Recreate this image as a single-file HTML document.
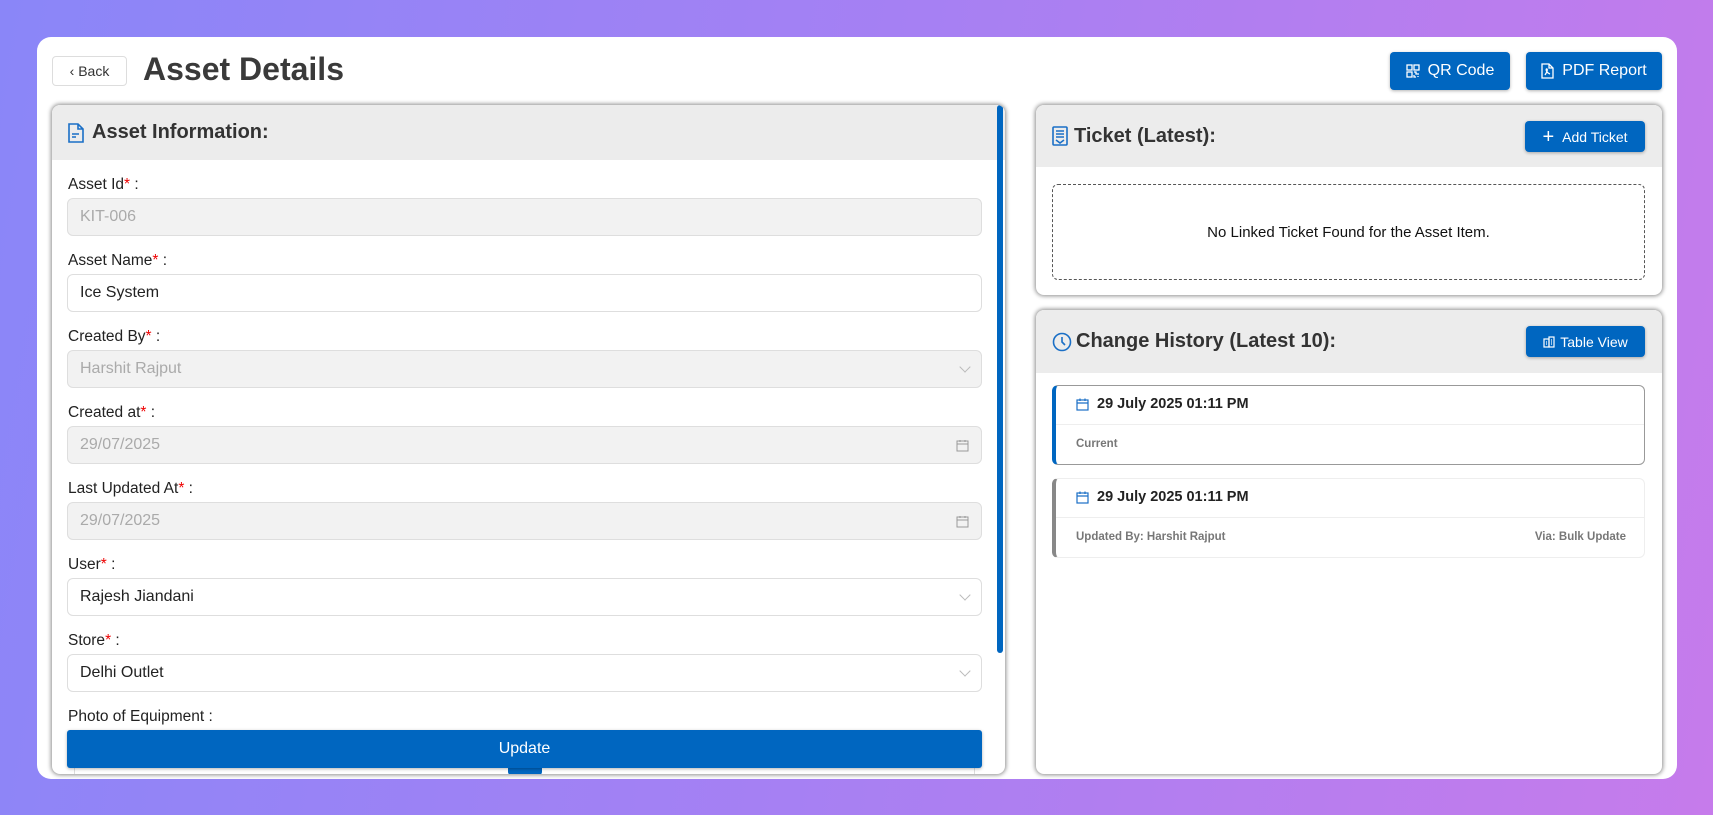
<!DOCTYPE html>
<html><head><meta charset="utf-8"><style>
*{box-sizing:border-box;margin:0;padding:0}
body{width:1713px;height:815px;overflow:hidden;background:linear-gradient(100deg,#8a86f8 0%,#a680f3 50%,#c67beb 100%);font-family:"Liberation Sans",sans-serif;color:#222;position:relative}
.card{position:absolute;left:37px;top:37px;width:1640px;height:742px;background:#fff;border-radius:14px}
.a{position:absolute}
.btn{position:absolute;background:#0066c0;color:#fff;border-radius:4px;display:flex;align-items:center;justify-content:center;gap:8px;font-size:16px;box-shadow:0 1px 3px rgba(0,0,0,.3)}
.panel{position:absolute;background:#fff;border-radius:8px;box-shadow:0 0 4px 1px rgba(0,0,0,.45);overflow:hidden}
.ph{position:absolute;left:0;top:0;right:0;background:#ececec;display:flex;align-items:center;font-weight:bold;font-size:20px;color:#333}
.lbl{position:absolute;left:16px;font-size:15.5px;color:#222}
.lbl i{color:#e00;font-style:normal}
.inp{position:absolute;left:15px;width:915px;height:38px;border:1px solid #dedede;border-radius:6px;font-size:16px;display:flex;align-items:center;padding-left:12px;color:#222}
.dis{background:#f2f2f2;color:#aaa}
.chev{position:absolute;right:12px;top:12px;width:8px;height:8px;border-right:1px solid #bbb;border-bottom:1px solid #bbb;transform:rotate(45deg)}
.cal{position:absolute;right:12px;top:12px}
.item{position:absolute;left:16px;width:593px;border-radius:6px;background:#fff}
</style></head><body>
<div class="card">
  <div class="a" style="left:15px;top:19px;width:75px;height:30px;border:1px solid #ddd;border-radius:4px;font-size:14px;display:flex;align-items:center;justify-content:center;color:#333">‹ Back</div>
  <div class="a" style="left:106px;top:14px;font-size:32px;font-weight:bold;color:#3a3a3a">Asset Details</div>
  <div class="btn" style="left:1353px;top:15px;width:120px;height:38px"><svg width="14" height="14" viewBox="0 0 14 14" fill="none" stroke="#fff" stroke-width="1.3"><rect x="1" y="1" width="5" height="5"/><rect x="8" y="1" width="5" height="5"/><rect x="1" y="8" width="5" height="5"/><path d="M8 8h2v2h3M8 11v2h2M12 12v1"/></svg>QR Code</div>
  <div class="btn" style="left:1489px;top:15px;width:136px;height:38px"><svg width="13" height="16" viewBox="0 0 13 16" fill="none" stroke="#fff" stroke-width="1.3"><path d="M1 1h7l4 4v10H1z M8 1v4h4"/><path d="M4 12c2-3 3-5 2-6s-2 3 3 5"/></svg>PDF Report</div>
</div>

<div class="panel" style="left:52px;top:105px;width:953px;height:669px">
  <div class="ph" style="height:55px;padding-left:16px;gap:8px"><svg width="16" height="20" viewBox="0 0 16 20" fill="none" stroke="#1a6fc6" stroke-width="1.6"><path d="M1 1h9l5 5v13H1z M10 1v5h5 M4 11h7 M4 14h4"/></svg>Asset Information:</div>
  <div class="a" style="right:2px;top:0;width:6px;height:548px;background:#0066c0;border-radius:3px"></div>
  <div class="lbl" style="top:71px">Asset Id<i>*</i> :</div>
  <div class="inp dis" style="top:93px">KIT-006</div>
  <div class="lbl" style="top:147px">Asset Name<i>*</i> :</div>
  <div class="inp" style="top:169px">Ice System</div>
  <div class="lbl" style="top:223px">Created By<i>*</i> :</div>
  <div class="inp dis" style="top:245px">Harshit Rajput<span class="chev"></span></div>
  <div class="lbl" style="top:299px">Created at<i>*</i> :</div>
  <div class="inp dis" style="top:321px">29/07/2025<svg class="cal" width="13" height="13" viewBox="0 0 13 13" fill="none" stroke="#999"><rect x="1" y="2" width="11" height="10"/><path d="M1 5h11M4 1v2M9 1v2"/></svg></div>
  <div class="lbl" style="top:375px">Last Updated At<i>*</i> :</div>
  <div class="inp dis" style="top:397px">29/07/2025<svg class="cal" width="13" height="13" viewBox="0 0 13 13" fill="none" stroke="#999"><rect x="1" y="2" width="11" height="10"/><path d="M1 5h11M4 1v2M9 1v2"/></svg></div>
  <div class="lbl" style="top:451px">User<i>*</i> :</div>
  <div class="inp" style="top:473px">Rajesh Jiandani<span class="chev"></span></div>
  <div class="lbl" style="top:527px">Store<i>*</i> :</div>
  <div class="inp" style="top:549px">Delhi Outlet<span class="chev"></span></div>
  <div class="lbl" style="top:603px">Photo of Equipment :</div>
  <div class="a" style="left:22px;top:660px;width:901px;height:20px;border:1px solid #ddd"></div>
  <div class="a" style="left:456px;top:660px;width:34px;height:10px;background:#0066c0;border-radius:3px"></div>
  <div class="btn" style="left:15px;top:625px;width:915px;height:38px;border-radius:3px;font-size:16px">Update</div>
</div>

<div class="panel" style="left:1036px;top:105px;width:626px;height:190px">
  <div class="ph" style="height:62px;padding-left:16px;gap:6px"><svg width="16" height="20" viewBox="0 0 16 20" fill="none" stroke="#1a6fc6" stroke-width="1.6"><rect x="1" y="1" width="14" height="18" rx="1"/><path d="M4 5h8M4 8h8M4 11h8M4 14l4 3 4-3"/></svg>Ticket (Latest):</div>
  <div class="btn" style="left:489px;top:16px;width:120px;height:31px;font-size:14px"><span style="font-size:20px;font-weight:300;line-height:1">+</span>Add Ticket</div>
  <div class="a" style="left:16px;top:79px;width:593px;height:96px;border:1px dashed #555;border-radius:6px;display:flex;align-items:center;justify-content:center;font-size:15px;color:#111">No Linked Ticket Found for the Asset Item.</div>
</div>

<div class="panel" style="left:1036px;top:310px;width:626px;height:464px">
  <div class="ph" style="height:63px;padding-left:16px;gap:4px"><svg width="20" height="20" viewBox="0 0 20 20" fill="none" stroke="#1a6fc6" stroke-width="1.6"><circle cx="10" cy="10" r="8.5"/><path d="M10 5v5l3 3"/></svg>Change History (Latest 10):</div>
  <div class="btn" style="left:490px;top:16px;width:119px;height:31px;font-size:14px;gap:5px"><svg width="12" height="12" viewBox="0 0 12 12" fill="none" stroke="#fff" stroke-width="1.2"><rect x="1" y="3" width="5" height="8"/><rect x="6" y="1" width="5" height="10"/><path d="M3 6h1M3 8h1M8 4h1M8 6h1M8 8h1"/></svg>Table View</div>
  <div class="item" style="top:75px;height:80px;border:1px solid #999;border-left:4px solid #0066c0">
    <div class="a" style="left:20px;top:10px;display:flex;align-items:center;gap:8px;font-weight:bold;font-size:14.5px;color:#222"><svg width="13" height="13" viewBox="0 0 13 13" fill="none" stroke="#1a6fc6" stroke-width="1.2"><rect x="1" y="2" width="11" height="10"/><path d="M1 5h11M4 0.5v2.5M9 0.5v2.5"/></svg>29 July 2025 01:11 PM</div>
    <div class="a" style="left:0;right:0;top:38px;border-top:1px solid #eee"></div>
    <div class="a" style="left:20px;top:52px;font-size:11.5px;font-weight:bold;color:#777">Current</div>
  </div>
  <div class="item" style="top:168px;height:80px;border:1px solid #eee;border-left:4px solid #888">
    <div class="a" style="left:20px;top:10px;display:flex;align-items:center;gap:8px;font-weight:bold;font-size:14.5px;color:#222"><svg width="13" height="13" viewBox="0 0 13 13" fill="none" stroke="#1a6fc6" stroke-width="1.2"><rect x="1" y="2" width="11" height="10"/><path d="M1 5h11M4 0.5v2.5M9 0.5v2.5"/></svg>29 July 2025 01:11 PM</div>
    <div class="a" style="left:0;right:0;top:38px;border-top:1px solid #eee"></div>
    <div class="a" style="left:20px;top:52px;font-size:11.5px;font-weight:bold;color:#777">Updated By: Harshit Rajput</div>
    <div class="a" style="right:18px;top:52px;font-size:11.5px;font-weight:bold;color:#777">Via: Bulk Update</div>
  </div>
</div>
</body></html>
